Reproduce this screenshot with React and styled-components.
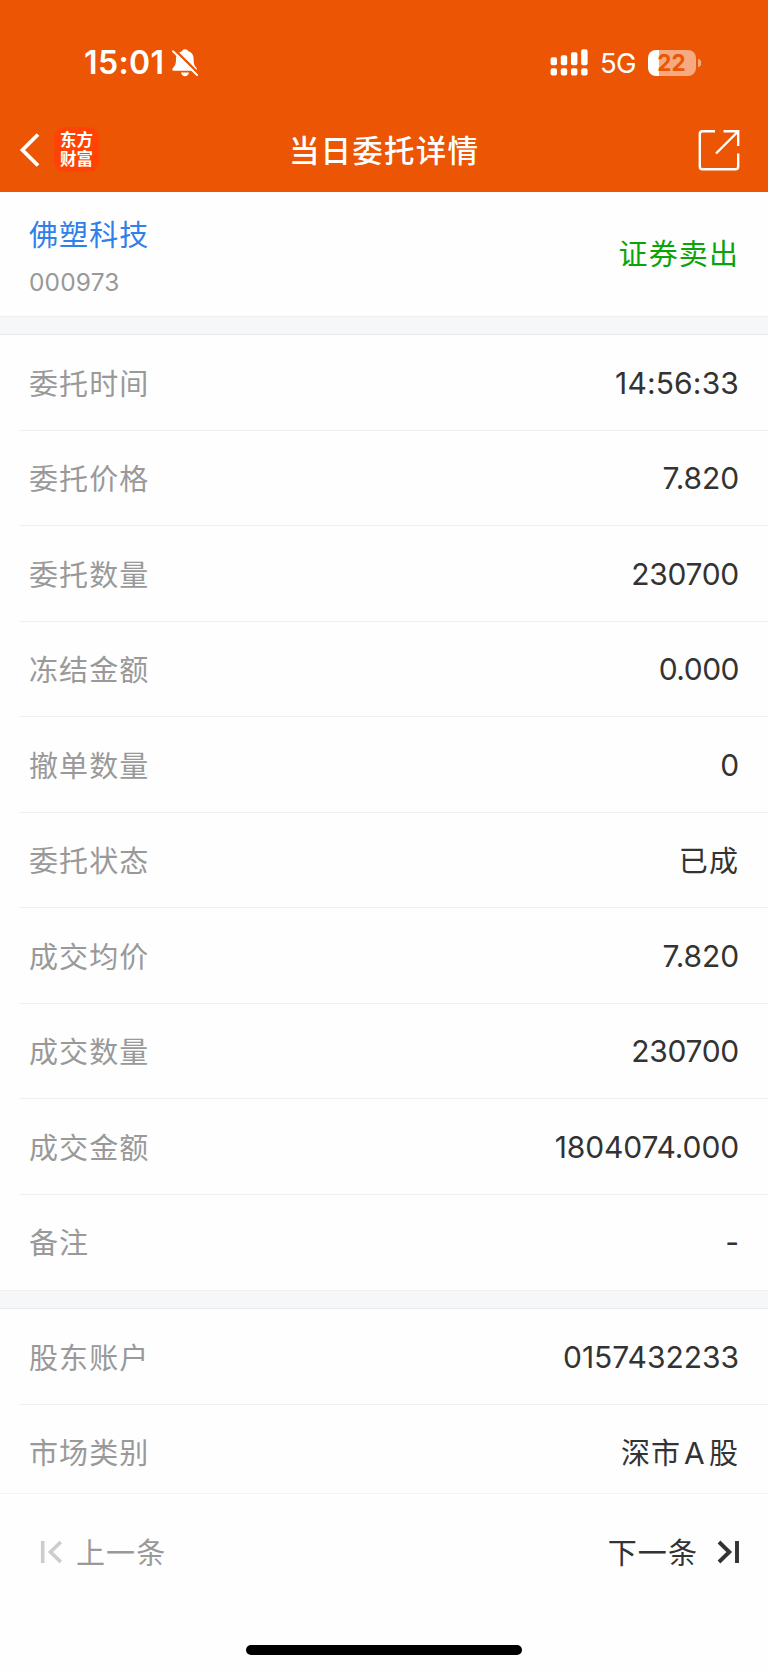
import React from "react";
import styled, { createGlobalStyle } from "styled-components";

const GlobalStyle = createGlobalStyle`
  * { box-sizing: border-box; }
  body {
    margin: 0;
    background: #fefefe;
    color: #333;
    font-family: Inter, "Noto Sans CJK SC", sans-serif;
  }
  svg { display: block; }
`;

const Page = styled.div`
  display: flex;
  flex-direction: column;
  width: 768px;
  height: 1670px;
  overflow: hidden;
  background: #fefefe;
`;

const Header = styled.header`
  height: 192px;
  flex: none;
  background: #eb5503;
  color: #fff;
`;

const StatusBar = styled.div`
  display: flex;
  align-items: center;
  height: 108px;
  padding: 17px 67px 0 84px;
`;

const Clock = styled.span`
  width: 88px;
  font-size: 32px;
  font-weight: 600;
  letter-spacing: 0.4px;
  line-height: 40px;
`;

const StatusIcons = styled.div`
  display: flex;
  align-items: center;
  margin-left: auto;
`;

const Network = styled.span`
  width: 48px;
  margin-left: 12px;
  font-size: 27.5px;
  line-height: 36px;
  letter-spacing: -0.6px;
  padding-top: 1px;
`;

const Battery = styled.div`
  display: flex;
  align-items: center;
  justify-content: center;
  width: 48px;
  height: 26px;
  border-radius: 8px;
  background: linear-gradient(to right, #fff 11px, #f5aa81 11px);
  color: #eb5503;
  font-size: 22.5px;
  font-weight: 700;
  line-height: 26px;
  padding-right: 1px;
`;

const BatteryCap = styled.span`
  width: 3px;
  height: 8px;
  margin-left: 2px;
  border-radius: 0 4px 4px 0;
  background: #f5aa81;
`;

const NavBar = styled.nav`
  display: grid;
  grid-template-columns: 160px 1fr 160px;
  align-items: center;
  height: 84px;
`;

const BackGroup = styled.div`
  display: flex;
  align-items: center;
  gap: 14px;
  padding-left: 20px;
`;

const Logo = styled.div`
  width: 45px;
  height: 45px;
  margin-bottom: 1px;
  padding-top: 3px;
  border-radius: 11px;
  background: #ff4304;
  text-align: center;
  font-family: "Noto Sans CJK SC", sans-serif;
  font-size: 16.5px;
  font-weight: 700;
  line-height: 19px;
`;

const Title = styled.h1`
  margin: 0;
  padding-bottom: 2px;
  text-align: center;
  font-family: "Noto Sans CJK SC", sans-serif;
  font-size: 30.5px;
  font-weight: 500;
  line-height: 44px;
  letter-spacing: 1.2px;
`;

const ShareButton = styled.div`
  display: flex;
  justify-content: flex-end;
  padding-right: 28px;
`;

const StockCard = styled.section`
  display: flex;
  align-items: center;
  justify-content: space-between;
  height: 124px;
  flex: none;
  padding: 0 29px;
`;

const StockInfo = styled.div`
  padding-top: 2px;
`;

const StockName = styled.div`
  font-family: "Noto Sans CJK SC", sans-serif;
  font-size: 29px;
  letter-spacing: 1.1px;
  line-height: 44px;
  color: #2f80ea;
`;

const StockCode = styled.div`
  margin-top: 9px;
  font-size: 24.5px;
  line-height: 36px;
  letter-spacing: 0.15px;
  color: #999;
`;

const Side = styled.div`
  padding-bottom: 5px;
  font-family: "Noto Sans CJK SC", sans-serif;
  font-size: 29px;
  letter-spacing: 1.1px;
  color: #0aa40a;
`;

const Divider = styled.div`
  height: 19px;
  flex: none;
  background: #f6f7f9;
  border-top: 1px solid #efefef;
  border-bottom: 1px solid #ebebeb;
`;

const List = styled.section`
  display: flex;
  flex-direction: column;
  height: ${(p) => p.$height}px;
  flex: none;
  overflow: hidden;
`;

const Row = styled.div`
  display: flex;
  align-items: center;
  justify-content: space-between;
  height: 95.5px;
  flex: none;
  margin-left: 19px;
  padding: 0 29px 0 10px;
  border-bottom: 1px solid #f0f0f0;
  &:last-child { border-bottom-color: transparent; }
`;

const Label = styled.span`
  padding-bottom: 1px;
  font-family: "Noto Sans CJK SC", sans-serif;
  font-size: 29px;
  letter-spacing: 1.1px;
  color: #999;
`;

const TextValue = styled.span`
  padding-bottom: 1px;
  font-family: "Noto Sans CJK SC", sans-serif;
  font-size: 29px;
  letter-spacing: 1.1px;
  color: #333;
`;

const NumberValue = styled.span`
  padding-top: 1px;
  font-family: Inter, sans-serif;
  font-size: 30px;
  letter-spacing: ${(p) => p.$spacing ?? -0.12}px;
  color: #333;
`;

const Latin = styled.span`
  margin: 0 3px;
  font-family: Inter, sans-serif;
  font-size: 30px;
`;

const Footer = styled.footer`
  display: flex;
  flex-direction: column;
  flex: 1;
  border-top: 1px solid #f3f3f3;
`;

const Pager = styled.div`
  display: flex;
  align-items: center;
  justify-content: space-between;
  height: 116px;
  padding: 0 28px 0 40px;
`;

const PagerButton = styled.div`
  display: flex;
  align-items: center;
  gap: ${(p) => p.$gap}px;
  color: ${(p) => (p.$muted ? "#999" : "#333")};
  font-family: "Noto Sans CJK SC", sans-serif;
  font-size: 29px;
  letter-spacing: 1.1px;
`;

const PagerText = styled.span`
  padding-bottom: 3px;
`;

const HomeIndicator = styled.div`
  width: 276px;
  height: 10px;
  margin: 35px auto 0;
  border-radius: 5px;
  background: #000;
`;

const BellOff = () => (
  <svg width="26" height="28" viewBox="0 0 26 28">
    <path d="M9.700 2.400C10.500.9 11.500.2 13 .2s2.700.7 3.300 2c3.900 1.200 5.300 4.200 5.300 7.600 0 5 .8 7 2.800 9 .7.8.6 2.200-.6 2.900H1.500C.2 21.700-.1 20.200.8 19.200c2.300-2.300 3.200-4 3.200-9.400 0-3.500 1.800-6.300 5.700-7.400Z" fill="#fff" />
    <path d="M9 23.400h8c-.5 2.400-2 3.800-4 3.800s-3.500-1.400-4-3.800Z" fill="#fff" />
    <path d="M2.600.6 27 25" stroke="#eb5503" strokeWidth="2.400" />
    <path d="M1 2.200 25 26" stroke="#fff" strokeWidth="2" strokeLinecap="round" />
  </svg>
);

const Signal = () => (
  <svg width="38" height="27" viewBox="0 0 38 27" fill="#fff">
    {[8.3, 6.3, 3.3, 0.2].map((y, i) => (
      <React.Fragment key={i}>
        <rect x={i * 10.2 + 0.6} y={y} width="6.400" height={16.2 - y} rx="1.900" />
        <rect x={i * 10.2 + 0.6} y="19.300" width="6.400" height="7.200" rx="1.900" />
      </React.Fragment>
    ))}
  </svg>
);

const Back = () => (
  <svg width="20" height="34" viewBox="0 0 20 34" fill="none" stroke="#fff" strokeWidth="3.800">
    <path d="M18 1.500 2.500 17 18 32.500" />
  </svg>
);

const Share = () => (
  <svg width="42" height="42" viewBox="0 0 42 42" fill="none" stroke="#fff" strokeWidth="2.400">
    <path d="M17 2.300H4.500Q1.800 2.300 1.800 5v32.500q0 2.700 2.700 2.700H37.500q2.700 0 2.700-2.700V24.500" />
    <path d="M25.500 2.300H40.200V17M39.500 3 18 24.500" />
  </svg>
);

const Previous = () => (
  <svg width="23" height="24" viewBox="0 0 23 24" fill="none" stroke="#ccc" strokeWidth="3.600">
    <path d="M2.700 1v22M20.800 2 10.500 12l10.300 10" />
  </svg>
);

const Next = () => (
  <svg width="23" height="24" viewBox="0 0 23 24" fill="none" stroke="#333" strokeWidth="3.900">
    <path d="M20 1v22M2 2l10.300 10L2 22" />
  </svg>
);

const order = [
  ["委托时间", <NumberValue $spacing={0.15}>14:56:33</NumberValue>],
  ["委托价格", <NumberValue>7.820</NumberValue>],
  ["委托数量", <NumberValue $spacing={-0.3}>230700</NumberValue>],
  ["冻结金额", <NumberValue $spacing={-0.5}>0.000</NumberValue>],
  ["撤单数量", <NumberValue>0</NumberValue>],
  ["委托状态", <TextValue>已成</TextValue>],
  ["成交均价", <NumberValue>7.820</NumberValue>],
  ["成交数量", <NumberValue $spacing={-0.3}>230700</NumberValue>],
  ["成交金额", <NumberValue>1804074.000</NumberValue>],
  ["备注", <NumberValue>-</NumberValue>],
];

const account = [
  ["股东账户", <NumberValue $spacing={-0.02}>0157432233</NumberValue>],
  ["市场类别", <TextValue>深市<Latin>A</Latin>股</TextValue>],
];

const Rows = ({ items, height }) => (
  <List $height={height}>
    {items.map(([label, value]) => (
      <Row key={label}>
        <Label>{label}</Label>
        {value}
      </Row>
    ))}
  </List>
);

export default function App() {
  return (
    <Page>
      <GlobalStyle />
      <Header>
        <StatusBar>
          <Clock>15:01</Clock>
          <BellOff />
          <StatusIcons>
            <Signal />
            <Network>5G</Network>
            <Battery>22</Battery>
            <BatteryCap />
          </StatusIcons>
        </StatusBar>
        <NavBar>
          <BackGroup>
            <Back />
            <Logo>
              东方
              <br />
              财富
            </Logo>
          </BackGroup>
          <Title>当日委托详情</Title>
          <ShareButton>
            <Share />
          </ShareButton>
        </NavBar>
      </Header>
      <StockCard>
        <StockInfo>
          <StockName>佛塑科技</StockName>
          <StockCode>000973</StockCode>
        </StockInfo>
        <Side>证券卖出</Side>
      </StockCard>
      <Divider />
      <Rows items={order} height={955} />
      <Divider />
      <Rows items={account} height={184} />
      <Footer>
        <Pager>
          <PagerButton $muted $gap={13}>
            <Previous />
            <PagerText>上一条</PagerText>
          </PagerButton>
          <PagerButton $gap={19}>
            <PagerText>下一条</PagerText>
            <Next />
          </PagerButton>
        </Pager>
        <HomeIndicator />
      </Footer>
    </Page>
  );
}
